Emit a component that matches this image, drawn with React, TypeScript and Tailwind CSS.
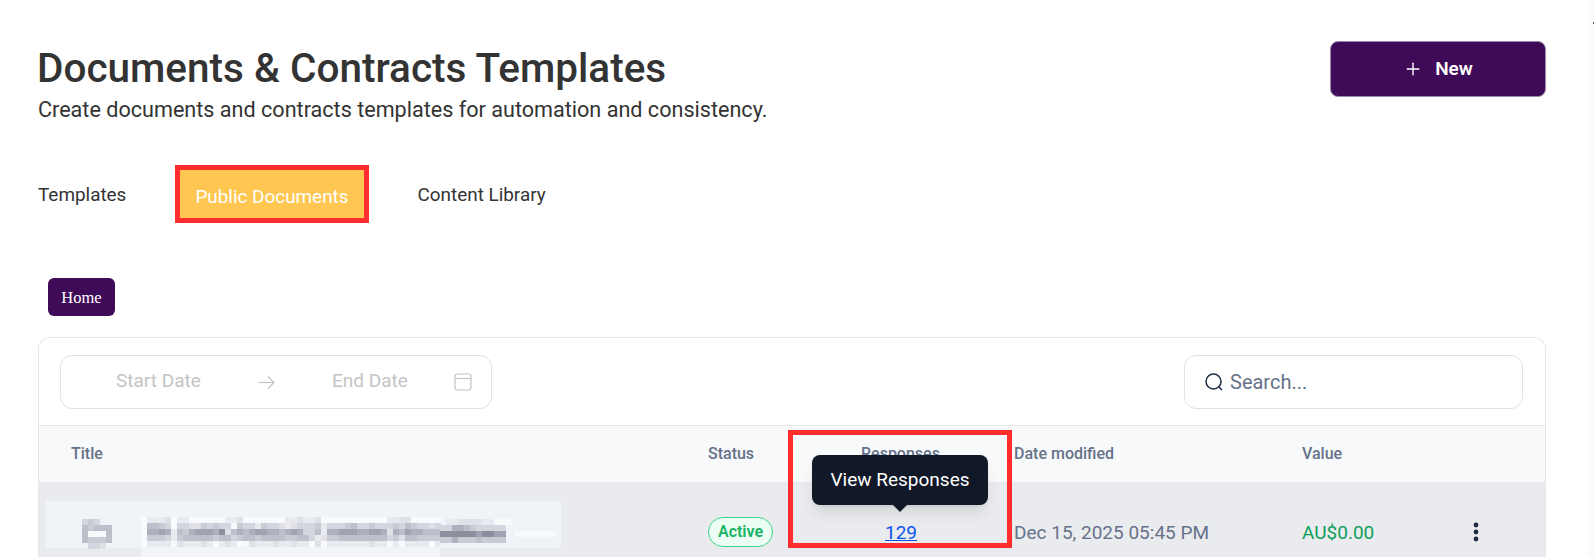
import { Plus } from 'lucide-react'

// blurred title cell: one digit per 6px block, darker as it goes up
const shades: Record<string, string> = {
  '1': '#f8f9fc',
  '2': '#e8eaef',
  '3': '#dfe1e7',
  '4': '#d3d6de',
  '5': '#c8cbd4',
  '6': '#bcc0cb',
  '7': '#adb1be',
  '8': '#a0a4b2',
  '9': '#8c909e',
}

const textBlocks = [
  '12223122111111223111111122322311111111111223311111',
  '16654144335454415442544323444524445644544454654434',
  '17787265788879367678877678744627788877887376877666',
  '15554256666656645665666655664235566666666453665555',
  '12222132223212321132223223221312222222322121222212',
]

const tailBlocks = [
  '.22333322111',
  '44776544444',
  '99999989988',
  '55755565555',
]

const iconBlocks = [
  '454..',
  '65666',
  '6...6',
  '65556',
  '.443.',
]

function BlurredTitle() {
  return (
    <svg width="516" height="56" viewBox="0 0 516 56" className="ml-[7px] mt-[19px]">
      <rect width="515" height="47" fill="#f0f3f8" />
      <rect x="95" y="47" width="299" height="9" fill="#f2f4f8" />
      {iconBlocks.map((row, y) =>
        row.split('').map((c, x) =>
          shades[c] ? <rect key={`i${y}-${x}`} x={36 + x * 6} y={18 + y * 6} width="6" height="6" fill={shades[c]} /> : null,
        ),
      )}
      <rect x="42" y="30" width="18" height="6" fill="#f8f9fc" />
      {textBlocks.map((row, y) =>
        row.split('').map((c, x) => (
          <rect key={`t${y}-${x}`} x={95 + x * 6} y={16 + y * 6} width="6" height="6" fill={shades[c]} />
        )),
      )}
      {tailBlocks.map((row, y) =>
        row.split('').map((c, x) =>
          shades[c] ? <rect key={`l${y}-${x}`} x={394 + x * 6} y={18 + y * 6} width="6" height="6" fill={shades[c]} /> : null,
        ),
      )}
      <rect x="468" y="30" width="42" height="6" fill="#f8f9fc" />
    </svg>
  )
}

export default function App() {
  return (
    <div className="flex h-[557px] w-[1594px] overflow-hidden bg-white font-['Roboto',sans-serif] text-[#333333]">
      <main className="w-[1588px] shrink-0 pl-[38px] pr-[42px]">
        <div className="flex items-start justify-between pt-[41px]">
          <div>
            <h1 className="mt-[1px] -ml-[1px] text-[40.5px] font-medium leading-[52px]">Documents &amp; Contracts Templates</h1>
            <p className="mt-[2px] text-[21.6px] leading-[28px]">Create documents and contracts templates for automation and consistency.</p>
          </div>
          <button className="flex h-14 w-[216px] items-center justify-center gap-3 rounded-lg border border-[#9a8aa3] bg-[#3f0a57] text-[19px] font-semibold text-white">
            <Plus className="h-5 w-5" strokeWidth={1.7} />
            New
          </button>
        </div>

        {/* Tabs */}
        <div className="mt-[41px] flex items-center gap-[49px] text-[18.9px]">
          <span className="mt-[3px]">Templates</span>
          <span className="border-[5px] border-[#ff2d2d] bg-[#ffc751] px-[15px] pt-[14px] pb-[8px] leading-[26px] text-white">Public Documents</span>
          <span className="mt-[3px]">Content Library</span>
        </div>

        <div className="mt-[55px] ml-[10px] flex h-[38px] w-[67px] items-center justify-center rounded-md bg-[#3f0a57] pt-[3px] font-['Liberation_Serif',serif] text-[16.5px] text-white">
          Home
        </div>

        {/* Table card */}
        <div className="relative mt-[21px] rounded-t-xl border border-b-0 border-[#e5e7eb]">
          <div className="flex h-[88px] items-center justify-between border-b border-[#e5e7eb] pl-[21px] pr-[22px]">
            <div className="flex h-[54px] w-[432px] items-center rounded-xl border border-[#e0e2e8] text-[19px] text-[#c4c4c4]">
              <span className="ml-[55px] w-[141px]">Start Date</span>
              <svg width="18" height="18" viewBox="0 0 18 18" fill="none" stroke="#c4c4c4" strokeWidth="1.2">
                <path d="M1 9.5h16M11 3.5l6 6-6 6" />
              </svg>
              <span className="ml-[57px] w-[122px]">End Date</span>
              <svg width="18" height="20" viewBox="0 0 18 20" fill="none" stroke="#c4c4c4" strokeWidth="1.2">
                <rect x="1" y="2" width="16" height="16" rx="2.5" />
                <path d="M1 6.5h16" />
              </svg>
            </div>
            <div className="flex h-[54px] w-[339px] items-center gap-[6px] rounded-xl border border-[#e0e2e8] pl-[19px] text-[20px] text-[#667289]">
              <svg width="20" height="20" viewBox="0 0 20 20" fill="none" stroke="#1f2c44" strokeWidth="1.5">
                <circle cx="9.5" cy="9.5" r="7.5" />
                <path d="M15 15l3 3" />
              </svg>
              Search...
            </div>
          </div>

          <div className="grid h-[56px] grid-cols-[669px_153px_153px_288px_1fr] items-center bg-[#f8f9fb] text-[16px] font-medium text-[#667289]">
            <span className="pl-[32px]">Title</span>
            <span>Status</span>
            <span>Responses</span>
            <span>Date modified</span>
            <span>Value</span>
          </div>

          <div className="grid h-[100px] grid-cols-[669px_153px_153px_288px_1fr] bg-[#e9ebef] text-[19px]">
            <BlurredTitle />
            <div className="pt-[35px]">
              <span className="inline-flex h-[30px] w-[65px] items-center justify-center rounded-full border border-[#3dd68c] bg-[#ecfdf3] text-base font-semibold text-[#16b364]">
                Active
              </span>
            </div>
            <div className="pt-[37px] pl-[24px]">
              <a href="#" className="text-[#0a55e8] underline">129</a>
            </div>
            <div className="pt-[37px] text-[#667289]">Dec 15, 2025 05:45 PM</div>
            <div className="flex pt-[37px]">
              <span className="text-[#0ea05a]">AU$0.00</span>
              <svg width="6" height="20" viewBox="0 0 6 20" fill="#1f2c44" className="ml-[99px] mt-[3px]">
                <circle cx="3" cy="3" r="2.4" />
                <circle cx="3" cy="10" r="2.4" />
                <circle cx="3" cy="17" r="2.4" />
              </svg>
            </div>
          </div>

          {/* Red annotation round the Responses column */}
          <div className="absolute left-[749px] top-[92px] h-[118px] w-[224px] border-[5px] border-[#ff2d2d]" />

          {/* Tooltip */}
          <div className="absolute left-[773px] top-[117px] flex h-[50px] w-[176px] items-center justify-center rounded-lg bg-[#111827] text-[19px] text-white shadow-lg">
            View Responses
            <span className="absolute -bottom-[7px] left-1/2 h-0 w-0 -translate-x-1/2 border-x-[7px] border-t-[7px] border-x-transparent border-t-[#111827]" />
          </div>
        </div>
      </main>
      <div className="relative flex-1 bg-[#fbfbfb]">
        <span className="absolute right-0 top-[22px] h-[2px] w-[1px] bg-[#555555]" />
      </div>
    </div>
  )
}
